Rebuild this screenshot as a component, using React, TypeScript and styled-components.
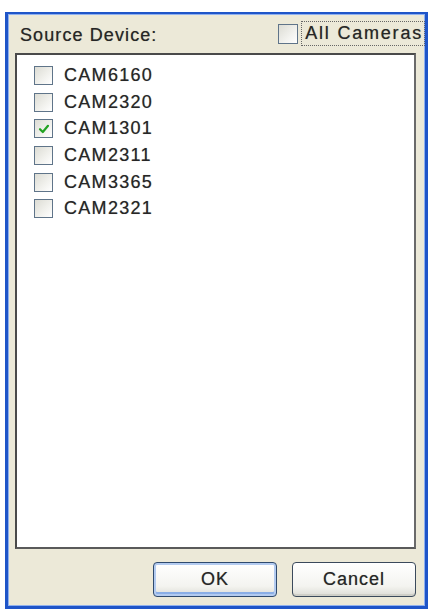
import React, { useState } from "react";
import styled, { createGlobalStyle } from "styled-components";

const Global = createGlobalStyle`
  html, body { margin: 0; padding: 0; background: #ffffff; }
  body { font-family: "Liberation Sans", Arial, sans-serif; }
`;

const Window = styled.div`
  box-sizing: border-box;
  margin: 12px 0 0 5px;
  width: 423px;
  height: 597px;
  background: #ece9d8;
  border-style: solid;
  border-color: #1f55c8;
  border-width: 2px 3px 3px 3px;
  box-shadow: inset 1px 1px 0 #8fb0ee, inset -1px -1px 0 #8fb0ee;
  display: flex;
  flex-direction: column;
`;

const Header = styled.div`
  height: 39px;
  display: flex;
  align-items: center;
  justify-content: space-between;
  padding: 0 1px 0 12px;
  flex: none;
`;

const Label = styled.span`
  font-size: 18px;
  letter-spacing: 1.1px;
  color: #262626;
  text-shadow: 0 0 0.7px rgba(0, 0, 0, 0.45);
  margin-top: 3px;
`;

const CheckRow = styled.label`
  display: flex;
  align-items: center;
  gap: 4px;
  cursor: default;
`;

const FocusText = styled.span`
  font-size: 18px;
  letter-spacing: 1.8px;
  color: #262626;
  text-shadow: 0 0 0.7px rgba(0, 0, 0, 0.45);
  padding: 1px 1px 1px 3px;
  outline: 1px dotted #666;
  outline-offset: 0;
`;

const Box = styled.span<{ $size?: number }>`
  box-sizing: border-box;
  width: ${(p) => p.$size ?? 20}px;
  height: ${(p) => p.$size ?? 20}px;
  border: 1.5px solid #5f7489;
  background: linear-gradient(135deg, #dcdcd4 0%, #f2f2ee 60%, #ffffff 100%);
  display: inline-flex;
  align-items: center;
  justify-content: center;
  flex: none;
`;

const List = styled.div`
  box-sizing: border-box;
  margin: 0 9px 0 7px;
  height: 496px;
  background: #ffffff;
  border-top: 2px solid #4a4a4a;
  border-left: 2px solid #4a4a4a;
  border-right: 2px solid #6a6a6a;
  border-bottom: 2px solid #5a5a5a;
  padding: 7px 0 0 17px;
  flex: none;
`;

const Item = styled.div`
  height: 26.7px;
  display: flex;
  align-items: center;
  gap: 11px;
`;

const ItemText = styled.span`
  font-size: 18px;
  letter-spacing: 1.3px;
  color: #262626;
  text-shadow: 0 0 0.7px rgba(0, 0, 0, 0.45);
`;

const Footer = styled.div`
  flex: 1;
  display: flex;
  justify-content: flex-end;
  align-items: flex-start;
  gap: 15px;
  padding: 13px 9px 0 0;
`;

const Button = styled.button<{ $default?: boolean }>`
  box-sizing: border-box;
  width: 124px;
  height: 35px;
  border: 1.5px solid ${(p) => (p.$default ? "#2f4a6e" : "#3b4a5c")};
  border-radius: 4px;
  background: linear-gradient(180deg, #ffffff 0%, #f4f4f0 70%, #dcdcd6 100%);
  box-shadow: ${(p) =>
    p.$default
      ? "inset 0 0 0 2px #b3cbf0, inset 0 -2px 0 2px #8aaee6"
      : "inset 0 -2px 0 #cfcfc8"};
  font-family: "Liberation Sans", Arial, sans-serif;
  font-size: 18px;
  letter-spacing: 1px;
  color: #262626;
  text-shadow: 0 0 0.7px rgba(0, 0, 0, 0.45);
  padding: 0;
  cursor: default;
`;

const Check = () => (
  <svg width="14" height="14" viewBox="0 0 14 14">
    <path d="M3 7.2 L5.8 10 L11 3.8" fill="none" stroke="#22a322" strokeWidth="2.2" strokeLinecap="round" strokeLinejoin="round" />
  </svg>
);

const cams = [
  { name: "CAM6160", checked: false },
  { name: "CAM2320", checked: false },
  { name: "CAM1301", checked: true },
  { name: "CAM2311", checked: false },
  { name: "CAM3365", checked: false },
  { name: "CAM2321", checked: false },
];

export default function App() {
  const [items] = useState(cams);
  return (
    <>
      <Global />
      <Window>
        <Header>
          <Label>Source Device:</Label>
          <CheckRow>
            <Box />
            <FocusText>All Cameras</FocusText>
          </CheckRow>
        </Header>
        <List>
          {items.map((c) => (
            <Item key={c.name}>
              <Box $size={19}>{c.checked && <Check />}</Box>
              <ItemText>{c.name}</ItemText>
            </Item>
          ))}
        </List>
        <Footer>
          <Button $default>OK</Button>
          <Button>Cancel</Button>
        </Footer>
      </Window>
    </>
  );
}
